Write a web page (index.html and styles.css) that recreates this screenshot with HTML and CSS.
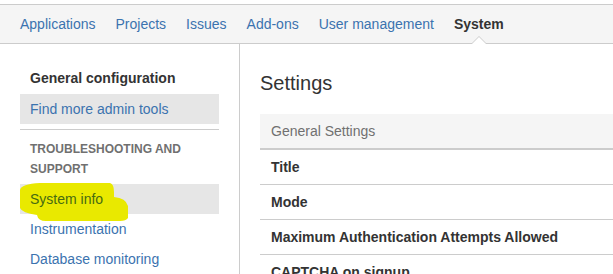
FILE: index.html
```html
<!DOCTYPE html>
<html>
<head>
<meta charset="utf-8">
<link rel="stylesheet" href="styles.css">
</head>
<body>
<nav class="topnav">
  <a class="nav-item">Applications</a>
  <a class="nav-item">Projects</a>
  <a class="nav-item">Issues</a>
  <a class="nav-item">Add-ons</a>
  <a class="nav-item">User management</a>
  <a class="nav-item active">System</a>
</nav>
<div class="layout">
  <aside class="sidebar">
    <div class="side-heading">General configuration</div>
    <a class="side-item selected">Find more admin tools</a>
    <hr class="side-sep">
    <div class="side-section">Troubleshooting and support</div>
    <a class="side-item selected marked">
      <svg class="marker" width="112" height="42" viewBox="0 -2 112 42"><path d="M0,6 Q1,0 20,-1 L90,-1 Q94,0 94,8 L94,13 Q106,14 108,22 L108,34 Q106,37 100,37 L26,37 Q18,37 17,31 Q2,29 0,24 Z" fill="#e9e900"/></svg>
      <span class="marked-text">System info</span>
    </a>
    <a class="side-item">Instrumentation</a>
    <a class="side-item">Database monitoring</a>
  </aside>
  <main class="main">
    <h1 class="page-title">Settings</h1>
    <div class="panel-head">General Settings</div>
    <div class="row">Title</div>
    <div class="row">Mode</div>
    <div class="row">Maximum Authentication Attempts Allowed</div>
    <div class="row">CAPTCHA on signup</div>
  </main>
</div>
</body>
</html>
```

FILE: styles.css
```css
html, body {
  margin: 0;
  padding: 0;
  background: #fff;
  font-family: "Liberation Sans", Arial, sans-serif;
  font-size: 14px;
  color: #333;
  overflow: hidden;
}
a { color: #3b73af; text-decoration: none; }

.topnav {
  margin-top: 4px;
  height: 38px;
  border-top: 1px solid #ccc;
  border-bottom: 1px solid #ccc;
  background: #f5f5f5;
  display: flex;
  padding-left: 10px;
}
.nav-item {
  padding: 0 10px;
  line-height: 38px;
  position: relative;
}
.nav-item.active {
  color: #333;
  font-weight: bold;
}
.nav-item.active::before {
  content: "";
  position: absolute;
  left: 50%;
  bottom: -1px;
  margin-left: -8px;
  border: 8px solid transparent;
  border-bottom-color: #ccc;
  border-top: 0;
}
.nav-item.active::after {
  content: "";
  position: absolute;
  left: 50%;
  bottom: -1px;
  margin-left: -7px;
  border: 7px solid transparent;
  border-bottom-color: #fff;
  border-top: 0;
}

.layout {
  display: flex;
  height: 230px;
}
.sidebar {
  box-sizing: border-box;
  width: 240px;
  flex: none;
  border-right: 1px solid #ccc;
  padding: 24px 20px 0 20px;
  display: flex;
  flex-direction: column;
}
.side-heading {
  font-weight: bold;
  line-height: 20px;
  padding-left: 10px;
  margin-bottom: 6px;
}
.side-item {
  display: block;
  position: relative;
  line-height: 20px;
  padding: 5px 10px;
  flex: none;
}
.side-item.selected { background: #e6e6e6; }
.side-sep {
  border: 0;
  border-top: 1px solid #ccc;
  margin: 5px 0 0 0;
  height: 0;
}
.side-section {
  margin: 10px 0 5px 0;
  padding-left: 10px;
  font-size: 12px;
  font-weight: bold;
  text-transform: uppercase;
  color: #707070;
  line-height: 19.5px;
}
.marker {
  position: absolute;
  left: 0;
  top: -2px;
  overflow: visible;
}
.marked-text {
  position: relative;
  color: #466b12;
}

.main {
  flex: 1;
  padding: 26.5px 0 0 20px;
}
.page-title {
  margin: 0 0 19.5px 0;
  font-size: 20px;
  font-weight: normal;
  line-height: 24px;
  color: #333;
}
.panel-head {
  background: #f5f5f5;
  height: 34px;
  line-height: 34px;
  padding-left: 11px;
  color: #707070;
  border-bottom: 2px solid #ccc;
}
.row {
  font-weight: bold;
  line-height: 20px;
  padding: 7px 11px;
  border-bottom: 1px solid #ccc;
  color: #333;
}
```
